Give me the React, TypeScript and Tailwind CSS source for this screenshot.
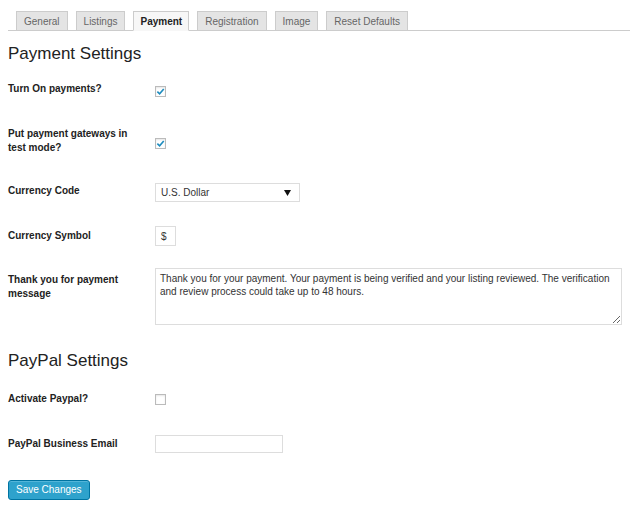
import React from 'react';

const tabs = ['General', 'Listings', 'Payment', 'Registration', 'Image', 'Reset Defaults'];

const Check = ({ checked, className = '' }: { checked?: boolean; className?: string }) => (
  <div className={`w-[11px] h-[11px] border border-[#bbb] bg-white shadow-[inset_0_1px_2px_rgba(0,0,0,0.1)] flex items-center justify-center ${className}`}>
    {checked && (
      <svg width="9" height="9" viewBox="0 0 10 10">
        <path d="M1.5 5.2 L4 7.6 L8.6 2.2" fill="none" stroke="#1e8cbe" strokeWidth="1.8" />
      </svg>
    )}
  </div>
);

const Label = ({ children, className = '' }: { children: React.ReactNode; className?: string }) => (
  <div className={`w-[147px] shrink-0 pr-3 text-[10px] leading-[14px] font-bold text-[#222] ${className}`}>{children}</div>
);

export default function App() {
  return (
    <div className="w-[630px] h-[507px] bg-white overflow-hidden font-['Liberation_Sans',Arial,sans-serif] text-[#333]">
      <div className="ml-[8px] pt-[11px] pl-[8px] flex gap-[8px] border-b border-[#ccc]">
        {tabs.map((t) =>
          t === 'Payment' ? (
            <div key={t} className="h-[20px] px-[6px] -mb-px flex items-center border border-[#ccc] border-b-[#f7f7f7] bg-[#f7f7f7] text-[10px] font-bold text-[#222]">
              {t}
            </div>
          ) : (
            <div key={t} className="h-[19px] px-[7px] flex items-center border border-b-0 border-[#ccc] bg-[#e4e4e4] text-[10px] text-[#666]">
              {t}
            </div>
          )
        )}
      </div>

      <div className="px-[8px]">
        <h2 className="mt-[11px] text-[17px] leading-[23px] text-[#222]">Payment Settings</h2>

        <div className="mt-[17px] flex items-start">
          <Label>Turn On payments?</Label>
          <Check checked className="mt-[4px]" />
        </div>

        <div className="mt-[30px] flex items-start">
          <Label>Put payment gateways in test mode?</Label>
          <Check checked className="mt-[11px]" />
        </div>

        <div className="mt-[28px] flex items-start">
          <Label className="mt-[1px]">Currency Code</Label>
          <div className="w-[145px] h-[19px] border border-[#ddd] bg-white flex items-center justify-between pl-[5px] pr-[8px] text-[10px] text-[#333]">
            <span>U.S. Dollar</span>
            <svg width="7" height="6" viewBox="0 0 7 6">
              <path d="M0 0 H7 L3.5 6 Z" fill="#111" />
            </svg>
          </div>
        </div>

        <div className="mt-[24px] flex items-start">
          <Label className="mt-[3px]">Currency Symbol</Label>
          <div className="w-[21px] h-[20px] border border-[#ddd] bg-white flex items-center pl-[5px] text-[10px] text-[#333]">$</div>
        </div>

        <div className="mt-[22px] flex items-start">
          <Label className="mt-[5px]">Thank you for payment message</Label>
          <textarea
            readOnly
            defaultValue="Thank you for your payment. Your payment is being verified and your listing reviewed. The verification and review process could take up to 48 hours."
            className="w-[473px] h-[57px] border border-[#ddd] bg-white pt-[3px] px-[4px] text-[10px] leading-[13px] text-[#333] outline-none font-['Liberation_Sans',Arial,sans-serif]"
          />
        </div>

        <h2 className="mt-[24px] text-[17px] leading-[23px] text-[#222]">PayPal Settings</h2>

        <div className="mt-[20px] flex items-start">
          <Label>Activate Paypal?</Label>
          <Check className="mt-[2px]" />
        </div>

        <div className="mt-[29px] flex items-start">
          <Label className="mt-[2px]">PayPal Business Email</Label>
          <div className="w-[128px] h-[18px] border border-[#ddd] bg-white" />
        </div>

        <button className="mt-[27px] h-[20px] px-[7px] rounded-[3px] border border-[#0074a2] bg-[#2ea2cc] text-white text-[10px] leading-none shadow-[inset_0_1px_0_rgba(120,200,230,0.5)]">
          Save Changes
        </button>
      </div>
    </div>
  );
}
